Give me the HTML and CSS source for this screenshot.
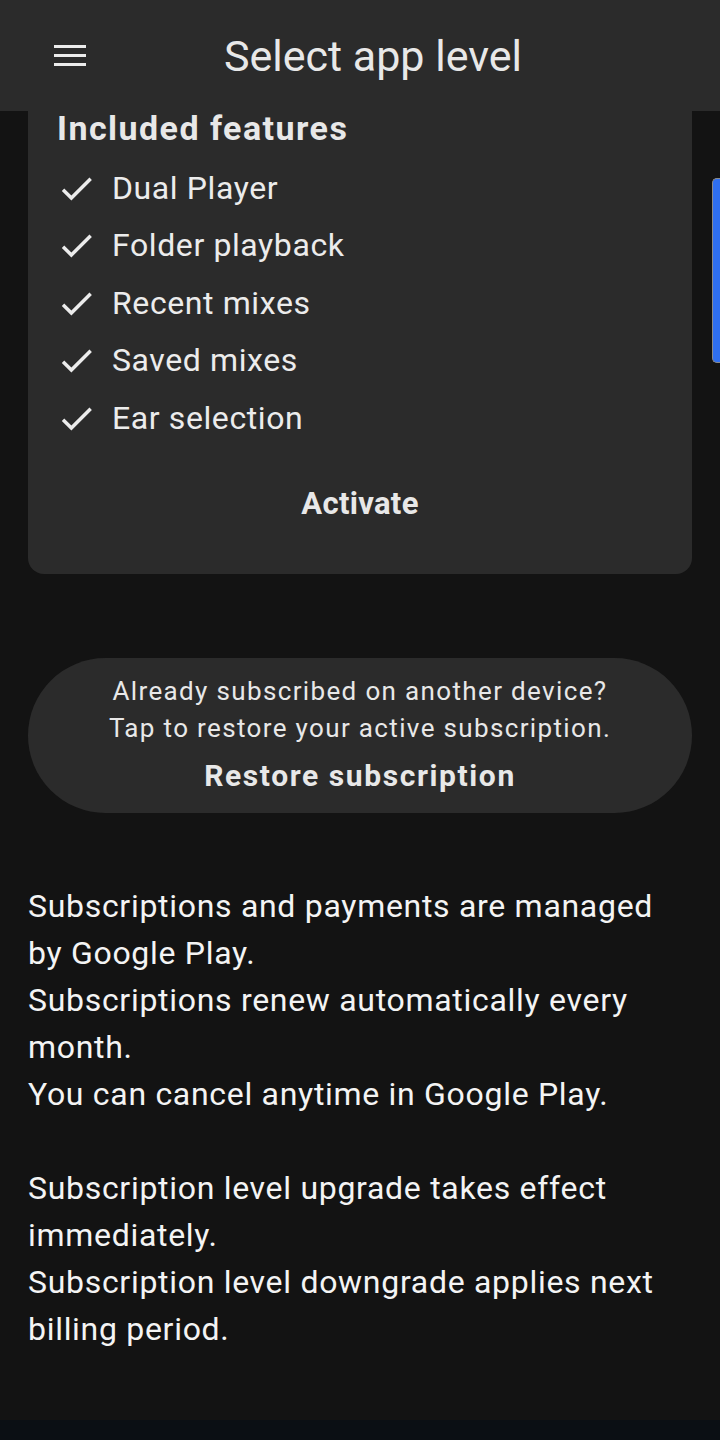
FILE: index.html
```html
<!DOCTYPE html>
<html lang="en">
<head>
<meta charset="utf-8">
<title>Select app level</title>
<link rel="stylesheet" href="styles.css">
</head>
<body>
<div class="screen">
  <header class="topbar">
    <svg class="menu-icon" width="32" height="21" viewBox="0 0 32 21"><rect x="0" y="0" width="32" height="3" fill="#ececec"/><rect x="0" y="9" width="32" height="3" fill="#ececec"/><rect x="0" y="18" width="32" height="3" fill="#ececec"/></svg>
    <h1 class="title">Select app level</h1>
  </header>
  <main class="content">
    <section class="card">
      <h2 class="card-heading">Included features</h2>
      <ul class="features">
        <li class="feature"><svg class="check" viewBox="0 0 24 24"><path d="M9 16.17L4.83 12l-1.42 1.41L9 19 21 7l-1.41-1.41z" fill="#ececec"/></svg><span>Dual Player</span></li>
        <li class="feature"><svg class="check" viewBox="0 0 24 24"><path d="M9 16.17L4.83 12l-1.42 1.41L9 19 21 7l-1.41-1.41z" fill="#ececec"/></svg><span>Folder playback</span></li>
        <li class="feature"><svg class="check" viewBox="0 0 24 24"><path d="M9 16.17L4.83 12l-1.42 1.41L9 19 21 7l-1.41-1.41z" fill="#ececec"/></svg><span>Recent mixes</span></li>
        <li class="feature"><svg class="check" viewBox="0 0 24 24"><path d="M9 16.17L4.83 12l-1.42 1.41L9 19 21 7l-1.41-1.41z" fill="#ececec"/></svg><span>Saved mixes</span></li>
        <li class="feature"><svg class="check" viewBox="0 0 24 24"><path d="M9 16.17L4.83 12l-1.42 1.41L9 19 21 7l-1.41-1.41z" fill="#ececec"/></svg><span>Ear selection</span></li>
      </ul>
      <div class="activate">Activate</div>
    </section>
    <section class="restore">
      <p class="restore-line">Already subscribed on another device?</p>
      <p class="restore-line">Tap to restore your active subscription.</p>
      <p class="restore-action">Restore subscription</p>
    </section>
    <p class="info">Subscriptions and payments are managed by Google Play.<br>Subscriptions renew automatically every month.<br>You can cancel anytime in Google Play.<br><br>Subscription level upgrade takes effect immediately.<br>Subscription level downgrade applies next billing period.</p>
  </main>
  <div class="scroll-thumb"></div>
  <div class="navbar"></div>
</div>
</body>
</html>
```

FILE: styles.css
```css
html, body {
  margin: 0;
  padding: 0;
  background: #131313;
}
body {
  font-family: Roboto, "Liberation Sans", sans-serif;
  color: #ececec;
}
.screen {
  position: relative;
  width: 720px;
  height: 1440px;
  overflow: hidden;
  background: #131313;
  display: flex;
  flex-direction: column;
}
.topbar {
  height: 111px;
  flex: 0 0 111px;
  background: #2b2b2b;
  display: flex;
  align-items: center;
  padding-left: 54px;
  box-sizing: border-box;
}
.menu-icon {
  display: block;
  flex: 0 0 auto;
}
.title {
  margin: 0 0 0 138px;
  font-size: 43px;
  line-height: 52px;
  font-weight: 400;
  color: #e8e8e8;
}
.content {
  flex: 1 1 auto;
  padding: 0 28px;
  display: flex;
  flex-direction: column;
}
.card {
  background: #2b2b2b;
  border-radius: 0 0 16px 16px;
  padding: 0 0 50px 0;
}
.card-heading {
  margin: 0;
  padding-left: 29px;
  font-size: 34px;
  line-height: 34px;
  font-weight: 700;
  letter-spacing: 1.45px;
  color: #e8e8e8;
}
.features {
  list-style: none;
  margin: 14.6px 0 0 0;
  padding: 0 0 0 28px;
}
.feature {
  height: 57.5px;
  display: flex;
  align-items: center;
  font-size: 32px;
  line-height: 57.5px;
  letter-spacing: 0.6px;
  color: #ececec;
}
.check {
  width: 41px;
  height: 41px;
  flex: 0 0 41px;
  margin-right: 15px;
}
.activate {
  margin-top: 37px;
  text-align: center;
  font-size: 31px;
  line-height: 40px;
  font-weight: 700;
  letter-spacing: 0.3px;
  color: #e8e8e8;
}
.restore {
  margin-top: 84px;
  height: 155px;
  box-sizing: border-box;
  background: #2b2b2b;
  border-radius: 78px;
  padding-top: 14.8px;
  text-align: center;
}
.restore-line {
  margin: 0;
  font-size: 26px;
  line-height: 36.7px;
  letter-spacing: 1.35px;
  color: #e8e8e8;
}
.restore-action {
  margin: 10px 0 0 0;
  font-size: 30px;
  line-height: 40px;
  font-weight: 700;
  letter-spacing: 1.6px;
  color: #e8e8e8;
}
.info {
  margin: 70px 0 0 0;
  font-size: 32px;
  line-height: 47px;
  letter-spacing: 0.7px;
  color: #f4f4f4;
}
.scroll-thumb {
  position: absolute;
  right: 0;
  top: 178px;
  width: 7px;
  height: 183px;
  background: #2f6ff0;
  border: 1px solid #8a8a8a;
  border-right: none;
  border-radius: 5px 0 0 5px;
}
.navbar {
  position: absolute;
  left: 0;
  right: 0;
  bottom: 0;
  height: 20px;
  background: #0b0f14;
}
```
